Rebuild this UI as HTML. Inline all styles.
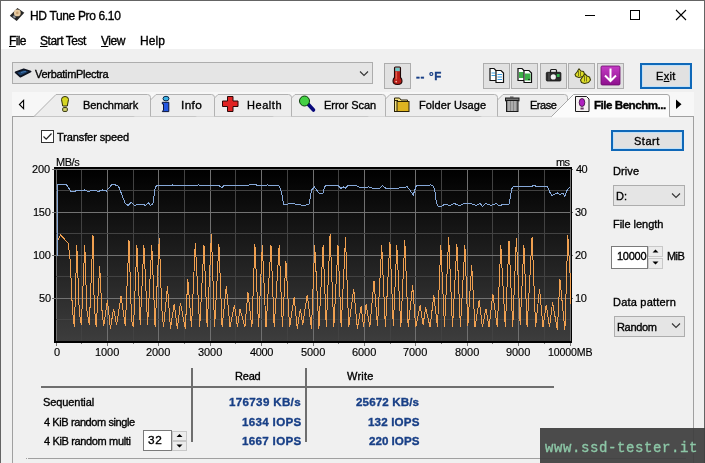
<!DOCTYPE html>
<html><head><meta charset="utf-8"><style>
*{margin:0;padding:0;box-sizing:border-box}
html,body{width:705px;height:463px;overflow:hidden;background:#f0f0f0}
body{position:relative;font-family:"Liberation Sans",sans-serif;color:#000}
.a{position:absolute}
.t{position:absolute;white-space:nowrap;line-height:1;will-change:transform;-webkit-text-stroke:0.35px currentColor}
.btn{position:absolute;background:#e1e1e1;border:1px solid #adadad}
.combo{position:absolute;background:#e5e5e5;border:1px solid #adadad}
.dbtn{position:absolute;background:#e1e1e1;border:2px solid #0f68b8;box-shadow:inset 0 0 0 1px #bfe0f8}
.blue{font-weight:bold;color:#183f86}
u{text-decoration:underline;text-decoration-thickness:1px;text-underline-offset:1px}
</style></head><body>
<div class="a" style="left:0;top:0;width:705px;height:49px;background:#fff"></div>
<div class="a" style="left:0;top:0;width:705px;height:1px;background:#646464"></div>
<div class="a" style="left:0;top:0;width:1px;height:463px;background:#646464"></div>
<div class="a" style="left:704px;top:0;width:1px;height:463px;background:#646464"></div>
<svg class="a" style="left:0;top:0" width="40" height="30">
<polygon points="17.4,8 24.3,12.8 16.7,20.9 9.8,15.7" fill="#262626"/>
<circle cx="17.3" cy="12.9" r="3.4" fill="#e6caa0"/><circle cx="17.3" cy="12.9" r="1.3" fill="#c8a070"/>
<polygon points="12.5,16.2 14.5,15 16,17.5 14.2,18.6" fill="#8a9098"/>
</svg>
<div class="a" style="left:585px;top:15px;width:10px;height:1px;background:#000"></div>
<div class="a" style="left:630px;top:10px;width:10px;height:10px;border:1px solid #000"></div>
<svg class="a" style="left:675px;top:9px" width="12" height="12"><path d="M1 1L11 11M11 1L1 11" stroke="#000" stroke-width="1.1"/></svg>
<div class="combo" style="left:12px;top:62px;width:361px;height:22px"></div>
<svg class="a" style="left:12px;top:64px" width="24" height="18">
<polygon points="3.6,8.3 11.7,5.3 18.6,7.5 8.3,12.6" fill="#1e4470" stroke="#0c1220" stroke-width="1.8" stroke-linejoin="round"/>
<path d="M9,8.6 L14,7.2" stroke="#3e74b0" stroke-width="1"/>
</svg>
<svg class="a" style="left:359px;top:70px" width="12" height="8"><path d="M1 1.5 L5 5.5 L9 1.5" fill="none" stroke="#333" stroke-width="1.1"/></svg>
<div class="btn" style="left:384px;top:63px;width:27px;height:26px"></div>
<svg class="a" style="left:386px;top:64px" width="22" height="24">
<path d="M8.5,4 Q8.5,3 9.5,3 L13.5,3 Q14.5,3 14.5,4 L14.5,13.5 Q16,15 16,17 Q16,20.5 11.5,20.5 Q7,20.5 7,17 Q7,15 8.5,13.5 Z" fill="#b81c16" stroke="#1e0606" stroke-width="1.1"/>
<rect x="9.2" y="3.6" width="4.6" height="3.6" fill="#70c8c8"/>
<rect x="9.5" y="7.5" width="1.6" height="8" fill="#e05a48"/>
<circle cx="10.2" cy="17.6" r="0.9" fill="#f0b0a0"/>
</svg>
<div class="btn" style="left:483px;top:63px;width:27px;height:26px"></div>
<div class="btn" style="left:511px;top:63px;width:27px;height:26px"></div>
<div class="btn" style="left:540px;top:63px;width:27px;height:26px"></div>
<div class="btn" style="left:568px;top:63px;width:27px;height:26px"></div>
<div class="btn" style="left:597px;top:63px;width:27px;height:26px"></div>
<svg class="a" style="left:484px;top:64px" width="54" height="24">
<path d="M6,4.5 L10.0,4.5 L12.5,7.0 L12.5,16.5 L6,16.5 Z" fill="#fff" stroke="#101010" stroke-width="1.2"/>
<path d="M7.5,9 h4 M7.5,11.5 h4" stroke="#3aa0e0" stroke-width="1.2"/>
<path d="M12,6.5 L17.0,6.5 L19.5,9.0 L19.5,18.5 L12,18.5 Z" fill="#fff" stroke="#101010" stroke-width="1.2"/>
<path d="M13.5,10.5 h4.5 M13.5,13 h4.5 M13.5,15.5 h4.5" stroke="#3a9ae0" stroke-width="1.2"/>
<path d="M34,4.5 L38.0,4.5 L40.5,7.0 L40.5,16.5 L34,16.5 Z" fill="#fff" stroke="#101010" stroke-width="1.2"/>
<rect x="35" y="8" width="4.5" height="6" fill="#3cb048"/>
<path d="M40,6.5 L45.0,6.5 L47.5,9.0 L47.5,18.5 L40,18.5 Z" fill="#fff" stroke="#101010" stroke-width="1.2"/>
<rect x="41" y="9.5" width="5.5" height="7" fill="#3cb048"/>
<circle cx="45" cy="15.5" r="0.8" fill="#111"/>
</svg>
<svg class="a" style="left:540px;top:64px" width="28" height="24">
<path d="M10.5,8.8 V6.5 Q10.5,5.5 11.5,5.5 L15.5,5.5 Q16.5,5.5 16.5,6.5 V8.8" fill="#e8e8e8" stroke="#1a1a1a" stroke-width="1.2"/>
<rect x="6.3" y="8.3" width="14.6" height="8.7" rx="1" fill="#2a2a2a" stroke="#141414" stroke-width="0.8"/>
<line x1="9" y1="9" x2="9" y2="16.5" stroke="#6a6a6a" stroke-width="0.8"/>
<circle cx="13.3" cy="12.9" r="2.6" fill="#f2f2f2"/>
<rect x="16.8" y="10" width="2.8" height="3" fill="#2fae4a"/>
</svg>
<svg class="a" style="left:569.5px;top:64px" width="28" height="24">
<path d="M5,10.5 L7,8 L9,4.8 L11,7 L13.5,7.5 L14.5,10 L13,12.5 L9,13.5 L6,12.5 Z" fill="#dede28" stroke="#3c3c0a" stroke-width="1.1" stroke-linejoin="round"/>
<path d="M10.5,16 L12.5,13 L15,10 L17,12 L19.5,13 L20.5,16 L18.5,18.5 L14.5,19.5 L11.5,18.5 Z" fill="#dede28" stroke="#3c3c0a" stroke-width="1.1" stroke-linejoin="round"/>
<path d="M8.5,7 v5 M10.5,7.5 v4.5 M14.5,12 v5.5 M16.5,12.5 v5" stroke="#6a6a14" stroke-width="0.9"/>
</svg>
<svg class="a" style="left:597px;top:64px" width="28" height="24">
<defs><linearGradient id="pg" x1="0" y1="0" x2="0" y2="1"><stop offset="0" stop-color="#c43cc4"/><stop offset="1" stop-color="#8e108e"/></linearGradient></defs>
<rect x="4" y="2" width="19" height="19" rx="1.2" fill="url(#pg)" stroke="#6a0a6a" stroke-width="0.8"/>
<path d="M13.5,4.5 V17 M8,11.5 L13.5,17 L19,11.5" fill="none" stroke="#fff" stroke-width="2"/>
</svg>
<div class="dbtn" style="left:640px;top:63px;width:52px;height:26px"></div>
<div class="a" style="left:12px;top:92px;width:682px;height:24px;background:#f7f7f7"></div>
<div class="a" style="left:12px;top:116px;width:682px;height:347px;border:1px solid #a0a0a0;border-bottom:none;background:#f0f0f0"></div>
<svg class="a" style="left:17px;top:98px" width="10" height="13"><path d="M6.6,2.4 L6.6,10.6 L2.4,6.5 Z" fill="none" stroke="#000" stroke-width="1.1"/></svg>
<svg class="a" style="left:674px;top:98px" width="10" height="13"><path d="M2,1.5 L7.5,6.3 L2,11 Z" fill="#000"/></svg>
<svg class="a" style="left:0;top:0" width="705" height="120">
<path d="M481,116.5 L503,94.5 L564.5,94.5 Q567.5,94.5 567.5,97.5 L567.5,116.5" fill="#ededed" stroke="#b2b2b2" stroke-width="1"/>
<path d="M368,116.5 L390,94.5 L494.5,94.5 Q497.5,94.5 497.5,97.5 L497.5,116.5" fill="#ededed" stroke="#b2b2b2" stroke-width="1"/>
<path d="M273,116.5 L295,94.5 L382.5,94.5 Q385.5,94.5 385.5,97.5 L385.5,116.5" fill="#ededed" stroke="#b2b2b2" stroke-width="1"/>
<path d="M196,116.5 L218,94.5 L288.5,94.5 Q291.5,94.5 291.5,97.5 L291.5,116.5" fill="#ededed" stroke="#b2b2b2" stroke-width="1"/>
<path d="M134,116.5 L156,94.5 L211.5,94.5 Q214.5,94.5 214.5,97.5 L214.5,116.5" fill="#ededed" stroke="#b2b2b2" stroke-width="1"/>
<path d="M34,116.5 L56,94.5 L147.5,94.5 Q150.5,94.5 150.5,97.5 L150.5,116.5" fill="#ededed" stroke="#b2b2b2" stroke-width="1"/>
<path d="M551.5,116.5 L573.5,94.5 L667,94.5 Q669.5,94.5 669.5,97 L669.5,116.5" fill="#fbfbfb" stroke="#a8a8a8" stroke-width="1"/>
<rect x="552" y="116" width="117" height="1.5" fill="#fbfbfb"/>
</svg>
<svg class="a" style="left:0;top:0" width="705" height="120">
<path d="M61.5,99.5 Q61.5,96.5 65,96.5 Q68.5,96.5 68.5,99.5 L67.3,106 L62.7,106 Z" fill="#d6d622" stroke="#2e2e08" stroke-width="1"/>
<rect x="62.7" y="107.6" width="4.6" height="3.8" rx="1" fill="#d6d670" stroke="#2e2e08" stroke-width="1"/>
<ellipse cx="166" cy="98.6" rx="3" ry="2.3" fill="#3cb2e4" stroke="#0c2848" stroke-width="1"/>
<path d="M162.3,102.3 L168.8,102.3 L168.8,111.6 L162.3,111.6 L163.5,110 L163.5,104 L162.3,104 Z" fill="#2456e0" stroke="#0a1438" stroke-width="1"/>
<path d="M227.5,96.5 h5.5 v4.5 h5 v5.5 h-5 v5 h-5.5 v-5 h-5 v-5.5 h5 Z" fill="#e02424" stroke="#2a0808" stroke-width="1"/>
<line x1="308" y1="104" x2="313.5" y2="110" stroke="#08087a" stroke-width="3.6" stroke-linecap="round"/>
<circle cx="304.5" cy="101" r="5" fill="#44d044" stroke="#0a3a0a" stroke-width="1"/>
<path d="M394.5,98 h5 l1.5,2 h6.5 v1.5 L394.5,101.5 Z" fill="#f0e080" stroke="#2a2208" stroke-width="1"/>
<rect x="394.5" y="100.5" width="3" height="11" fill="#f0e080" stroke="#2a2208" stroke-width="1"/>
<rect x="397" y="101.5" width="12" height="10" fill="#deb420" stroke="#2a2208" stroke-width="1"/>
<rect x="505.5" y="98" width="13.5" height="2.8" fill="#707070" stroke="#1a1a1a" stroke-width="1"/>
<rect x="510" y="96.5" width="3.5" height="1.8" fill="#555" />
<rect x="506.5" y="100.5" width="11.5" height="11" fill="#888" stroke="#1a1a1a" stroke-width="1"/>
<path d="M509,101 v10 M512,101 v10 M515,101 v10" stroke="#d0d0d0" stroke-width="1"/>
<path d="M575.5,96.5 L586.5,96.5 L589,99 L589,111.5 L575.5,111.5 Z" fill="#f4f0f0" stroke="#1a1a1a" stroke-width="1"/>
<ellipse cx="582" cy="102.5" rx="2.8" ry="4" fill="#b020c0" stroke="#3a0a3a" stroke-width="0.8"/>
<rect x="580.5" y="107.5" width="3.2" height="2" fill="#6a3a6a"/>
</svg>
<div class="a" style="left:41px;top:130px;width:13px;height:13px;border:1px solid #333;background:#fff"></div>
<svg class="a" style="left:41px;top:130px" width="13" height="13"><path d="M2.5,6.5 L5.2,9.2 L10.5,3.5" fill="none" stroke="#222" stroke-width="1.2"/></svg>
<svg class="a" style="left:0;top:0" width="705" height="463">
<defs><linearGradient id="bg" x1="0" y1="0" x2="0" y2="1"><stop offset="0" stop-color="#000"/><stop offset="1" stop-color="#3d3d3d"/></linearGradient></defs>
<rect x="54" y="167" width="518" height="176" fill="#000"/>
<rect x="56" y="169" width="515" height="172" fill="url(#bg)"/>
<g stroke="#5c5c5c" stroke-width="1" shape-rendering="crispEdges"><line x1="56.5" y1="169" x2="56.5" y2="341" stroke="#707070"/><line x1="56.5" y1="343" x2="56.5" y2="346" stroke="#7a7a7a"/><line x1="81.5" y1="169" x2="81.5" y2="341" stroke="#424242"/><line x1="81.5" y1="343" x2="81.5" y2="344" stroke="#7a7a7a"/><line x1="107.5" y1="169" x2="107.5" y2="341" stroke="#707070"/><line x1="107.5" y1="343" x2="107.5" y2="346" stroke="#7a7a7a"/><line x1="133.5" y1="169" x2="133.5" y2="341" stroke="#424242"/><line x1="133.5" y1="343" x2="133.5" y2="344" stroke="#7a7a7a"/><line x1="158.5" y1="169" x2="158.5" y2="341" stroke="#707070"/><line x1="158.5" y1="343" x2="158.5" y2="346" stroke="#7a7a7a"/><line x1="184.5" y1="169" x2="184.5" y2="341" stroke="#424242"/><line x1="184.5" y1="343" x2="184.5" y2="344" stroke="#7a7a7a"/><line x1="210.5" y1="169" x2="210.5" y2="341" stroke="#707070"/><line x1="210.5" y1="343" x2="210.5" y2="346" stroke="#7a7a7a"/><line x1="235.5" y1="169" x2="235.5" y2="341" stroke="#424242"/><line x1="235.5" y1="343" x2="235.5" y2="344" stroke="#7a7a7a"/><line x1="261.5" y1="169" x2="261.5" y2="341" stroke="#707070"/><line x1="261.5" y1="343" x2="261.5" y2="346" stroke="#7a7a7a"/><line x1="287.5" y1="169" x2="287.5" y2="341" stroke="#424242"/><line x1="287.5" y1="343" x2="287.5" y2="344" stroke="#7a7a7a"/><line x1="313.5" y1="169" x2="313.5" y2="341" stroke="#707070"/><line x1="313.5" y1="343" x2="313.5" y2="346" stroke="#7a7a7a"/><line x1="338.5" y1="169" x2="338.5" y2="341" stroke="#424242"/><line x1="338.5" y1="343" x2="338.5" y2="344" stroke="#7a7a7a"/><line x1="364.5" y1="169" x2="364.5" y2="341" stroke="#707070"/><line x1="364.5" y1="343" x2="364.5" y2="346" stroke="#7a7a7a"/><line x1="390.5" y1="169" x2="390.5" y2="341" stroke="#424242"/><line x1="390.5" y1="343" x2="390.5" y2="344" stroke="#7a7a7a"/><line x1="415.5" y1="169" x2="415.5" y2="341" stroke="#707070"/><line x1="415.5" y1="343" x2="415.5" y2="346" stroke="#7a7a7a"/><line x1="441.5" y1="169" x2="441.5" y2="341" stroke="#424242"/><line x1="441.5" y1="343" x2="441.5" y2="344" stroke="#7a7a7a"/><line x1="467.5" y1="169" x2="467.5" y2="341" stroke="#707070"/><line x1="467.5" y1="343" x2="467.5" y2="346" stroke="#7a7a7a"/><line x1="492.5" y1="169" x2="492.5" y2="341" stroke="#424242"/><line x1="492.5" y1="343" x2="492.5" y2="344" stroke="#7a7a7a"/><line x1="518.5" y1="169" x2="518.5" y2="341" stroke="#707070"/><line x1="518.5" y1="343" x2="518.5" y2="346" stroke="#7a7a7a"/><line x1="544.5" y1="169" x2="544.5" y2="341" stroke="#424242"/><line x1="544.5" y1="343" x2="544.5" y2="344" stroke="#7a7a7a"/><line x1="570.5" y1="169" x2="570.5" y2="341" stroke="#707070"/><line x1="570.5" y1="343" x2="570.5" y2="346" stroke="#7a7a7a"/><line x1="52" y1="169.5" x2="573" y2="169.5" stroke="#727272"/><line x1="56" y1="190.5" x2="570" y2="190.5" stroke="#424242"/><line x1="52" y1="212.5" x2="573" y2="212.5" stroke="#727272"/><line x1="56" y1="233.5" x2="570" y2="233.5" stroke="#424242"/><line x1="52" y1="255.5" x2="573" y2="255.5" stroke="#727272"/><line x1="56" y1="276.5" x2="570" y2="276.5" stroke="#424242"/><line x1="52" y1="298.5" x2="573" y2="298.5" stroke="#727272"/><line x1="56" y1="319.5" x2="570" y2="319.5" stroke="#424242"/><line x1="56" y1="341.5" x2="570" y2="341.5" stroke="#727272"/></g>
<g fill="none" stroke-width="1" stroke-linejoin="miter" shape-rendering="crispEdges">
<polyline points="57.5,240.5 60.7,234.9 68.2,243.4 69.9,256.5 71.4,285.1 72.4,309.9 74.4,327.3 76.8,245.4 79.3,312.4 81.3,324.8 84.8,245.4 86.8,309.9 89.3,324.8 93.0,235.4 94.2,305.0 96.2,327.3 99.7,266.5 101.7,307.5 103.7,326.1 107.4,300.0 110.4,328.5 113.6,308.7 116.6,324.8 121.0,296.3 125.3,326.1 129.0,240.4 131.5,319.9 133.5,327.3 136.9,245.4 140.2,324.8 143.9,245.4 147.6,324.8 151.8,245.4 155.1,327.3 159.3,237.9 161.7,307.5 163.5,327.3 167.5,286.3 170.5,328.5 174.2,303.7 177.4,328.5 180.4,303.0 185.3,328.5 187.8,278.9 191.5,327.3 195.3,242.9 199.7,327.3 204.0,245.4 207.2,327.3 211.4,234.2 214.6,327.3 218.9,244.1 222.1,327.3 226.3,286.3 230.0,327.3 234.5,305.0 237.5,327.3 240.0,308.7 244.9,327.3 247.9,292.5 251.9,327.3 254.9,244.1 258.6,327.3 262.3,245.4 266.0,327.3 271.0,245.4 274.2,327.3 279.2,245.4 282.4,327.3 285.9,261.5 289.6,327.3 294.1,297.5 297.3,328.5 300.3,308.7 302.7,324.8 307.2,295.0 311.5,328.5 314.7,245.4 318.9,328.5 323.1,245.4 326.3,327.3 330.1,234.2 333.8,327.3 338.0,245.4 341.2,327.3 345.5,237.4 348.7,327.3 353.7,288.8 357.4,328.5 361.1,306.2 363.6,327.3 366.1,303.7 369.8,327.3 374.0,280.6 377.5,326.1 381.7,245.4 385.4,327.3 389.9,241.6 393.3,326.1 396.8,245.4 400.8,327.3 404.8,240.4 408.2,327.3 412.7,285.1 415.7,327.3 420.2,305.5 423.1,324.8 425.6,307.5 430.1,327.3 433.8,295.0 437.5,327.3 440.8,245.4 444.5,327.3 448.7,237.4 452.5,327.3 456.9,244.1 460.4,327.3 464.9,245.4 467.8,326.1 471.7,265.2 475.0,327.3 479.2,300.0 482.4,327.3 485.9,308.7 489.1,327.3 492.8,293.8 497.3,327.3 500.8,245.4 505.3,327.3 509.0,240.9 512.7,327.3 516.4,237.9 520.2,324.8 523.9,245.4 527.1,327.3 532.1,236.7 535.6,327.3 539.5,288.8 543.0,327.3 546.2,305.0 549.5,327.3 552.5,302.5 557.4,329.8 559.9,278.9 564.9,329.8 567.8,235.4 570.3,277.6 571.1,307.5" stroke="#f0a050"/>
<polyline points="57.5,255.5 57.5,184.8 66.5,184.8 71.0,191.5 73.3,192.0 75.5,191.0 82.3,190.8 84.5,190.0 88.3,191.5 94.3,190.0 98.1,191.5 102.6,190.0 106.4,191.0 111.6,185.0 113.9,184.5 118.4,186.0 121.4,193.5 125.2,203.5 128.2,205.5 131.2,202.5 134.2,205.5 138.7,204.0 142.5,204.0 145.5,205.5 148.5,203.0 150.7,205.5 153.0,203.5 155.2,187.5 157.0,185.7 171.4,185.7 172.9,184.8 174.4,185.7 197.2,185.7 198.7,184.8 201.2,185.9 203.2,185.0 210.6,185.0 211.6,185.7 219.1,185.7 221.8,187.6 224.0,185.7 248.3,185.7 249.3,184.8 256.2,184.8 257.2,185.7 266.2,185.7 267.7,184.8 269.7,185.7 278.6,185.7 280.1,187.9 281.1,190.9 282.1,195.9 283.8,204.5 288.0,204.0 292.5,203.5 298.2,204.5 304.6,205.5 309.2,204.0 311.5,189.9 314.4,186.9 316.4,189.9 319.9,193.9 322.9,193.9 324.4,187.4 325.4,185.9 328.8,185.0 337.3,185.0 340.8,188.4 343.7,186.9 345.7,188.1 348.2,185.0 351.2,185.0 354.2,185.9 356.6,185.9 359.6,187.4 365.1,187.9 368.1,186.9 371.0,187.4 373.5,188.9 378.9,188.9 382.4,185.7 386.9,188.9 390.4,188.1 396.3,188.1 397.8,188.9 399.3,187.9 407.2,186.9 408.7,188.4 413.2,194.9 416.2,185.9 419.7,185.0 424.1,185.0 425.6,185.7 429.1,185.7 430.6,184.8 433.1,185.9 434.1,188.4 434.9,191.4 435.7,198.5 437.5,206.0 441.2,206.5 444.9,204.0 449.5,205.5 454.1,203.5 459.6,205.5 464.3,203.5 471.6,204.0 476.2,205.5 479.9,203.5 482.7,206.5 485.5,203.5 491.0,205.5 496.5,203.5 499.3,206.0 503.9,204.0 509.0,204.5 510.6,195.5 512.2,187.5 513.8,186.2 532.4,186.2 534.0,185.0 535.6,186.0 547.3,186.0 550.0,192.5 552.1,195.5 557.4,193.0 560.1,194.5 562.7,193.0 564.9,196.5 567.0,190.5 570.2,186.5" stroke="#86a8d8"/>
</g>
<rect x="54" y="341" width="518" height="2" fill="#000"/>
<rect x="571" y="167" width="1" height="176" fill="#000"/>
</svg>
<div class="dbtn" style="left:611px;top:130px;width:73px;height:21px"></div>
<div class="combo" style="left:613px;top:185px;width:72px;height:21px"></div>
<svg class="a" style="left:671px;top:192px" width="12" height="8"><path d="M1 1.5 L5 5.5 L9 1.5" fill="none" stroke="#333" stroke-width="1.1"/></svg>
<div class="a" style="left:611px;top:246px;width:37px;height:23px;border:1px solid #7a7a7a;background:#fff"></div>
<div class="btn" style="left:648px;top:246px;width:15px;height:11px;background:#ececec;border-color:#c8c8c8"></div>
<div class="btn" style="left:648px;top:258px;width:15px;height:11px;background:#ececec;border-color:#c8c8c8"></div>
<svg class="a" style="left:648px;top:246px" width="15" height="23"><path d="M4.5,6.5 L7.5,3.5 L10.5,6.5 Z M4.5,15.5 L7.5,18.5 L10.5,15.5 Z" fill="#000"/></svg>
<div class="combo" style="left:614px;top:316px;width:71px;height:21px"></div>
<svg class="a" style="left:671px;top:322px" width="12" height="8"><path d="M1 1.5 L5 5.5 L9 1.5" fill="none" stroke="#333" stroke-width="1.1"/></svg>
<div class="a" style="left:41px;top:386px;width:513px;height:2px;background:#6e6e6e"></div>
<div class="a" style="left:191px;top:368px;width:2px;height:74px;background:#6e6e6e"></div>
<div class="a" style="left:305px;top:368px;width:2px;height:74px;background:#6e6e6e"></div>
<div class="a" style="left:143px;top:430px;width:29px;height:21px;border:1px solid #7a7a7a;background:#fff"></div>
<div class="btn" style="left:172px;top:431px;width:15px;height:10px;background:#ececec;border-color:#c8c8c8"></div>
<div class="btn" style="left:172px;top:441px;width:15px;height:10px;background:#ececec;border-color:#c8c8c8"></div>
<svg class="a" style="left:172px;top:431px" width="15" height="20"><path d="M4.5,6 L7.5,3 L10.5,6 Z M4.5,13.5 L7.5,16.5 L10.5,13.5 Z" fill="#000"/></svg>
<div class="a" style="left:28px;top:458px;width:658px;height:1px;background:#a0a0a0"></div><div class="a" style="left:26px;top:458px;width:1px;height:1px;background:#a0a0a0"></div>
<div class="t" style="left:30.0px;top:10px;font-size:12px;letter-spacing:-0.35px">HD Tune Pro 6.10</div>
<div class="t" style="left:9.1px;top:35px;font-size:12px;letter-spacing:-0.6px"><u>F</u>ile</div>
<div class="t" style="left:40.2px;top:35px;font-size:12px;letter-spacing:-0.467px"><u>S</u>tart Test</div>
<div class="t" style="left:101.2px;top:35px;font-size:12px;letter-spacing:-0.433px"><u>V</u>iew</div>
<div class="t" style="left:139.9px;top:35px;font-size:12px;letter-spacing:0.1px">Help</div>
<div class="t" style="left:35.2px;top:69px;font-size:11px;letter-spacing:-0.293px">VerbatimPlectra</div>
<div class="t" style="left:655.8px;top:71px;font-size:11px;letter-spacing:0.3px">E<u>x</u>it</div>
<div class="t" style="left:83.0px;top:100px;font-size:11px;letter-spacing:-0.062px">Benchmark</div>
<div class="t" style="left:181.1px;top:100px;font-size:11.8px;letter-spacing:0.367px">Info</div>
<div class="t" style="left:246.7px;top:100px;font-size:11px;letter-spacing:0.54px">Health</div>
<div class="t" style="left:323.7px;top:100px;font-size:11px;letter-spacing:-0.044px">Error Scan</div>
<div class="t" style="left:419.0px;top:100px;font-size:11px;letter-spacing:0.1px">Folder Usage</div>
<div class="t" style="left:530.0px;top:100px;font-size:11px;letter-spacing:-0.475px">Erase</div>
<div class="t" style="left:57.3px;top:132px;font-size:11px;letter-spacing:-0.108px">Transfer speed</div>
<div class="t" style="left:633.7px;top:136px;font-size:11px;letter-spacing:0.525px">Start</div>
<div class="t" style="left:612.7px;top:166px;font-size:11px;letter-spacing:0.1px">Drive</div>
<div class="t" style="left:615.5px;top:191px;font-size:11px;letter-spacing:0.0px">D:</div>
<div class="t" style="left:612.7px;top:219px;font-size:11px;letter-spacing:-0.04px">File length</div>
<div class="t" style="left:617.0px;top:251px;font-size:11px;letter-spacing:-0.25px">10000</div>
<div class="t" style="left:666.9px;top:251px;font-size:11px;letter-spacing:-0.6px">MiB</div>
<div class="t" style="left:612.9px;top:297px;font-size:11px;letter-spacing:0.209px">Data pattern</div>
<div class="t" style="left:616.6px;top:322px;font-size:11px;letter-spacing:-0.34px">Random</div>
<div class="t" style="left:234.65px;top:371px;font-size:11px;letter-spacing:-0.217px">Read</div>
<div class="t" style="left:346.7px;top:371px;font-size:11px;letter-spacing:0.25px">Write</div>
<div class="t" style="left:43.0px;top:397px;font-size:11px;letter-spacing:-0.089px">Sequential</div>
<div class="t" style="left:44.0px;top:417px;font-size:11px;letter-spacing:-0.403px">4 KiB random single</div>
<div class="t" style="left:44.0px;top:436px;font-size:11px;letter-spacing:-0.353px">4 KiB random multi</div>
<div class="t" style="left:148.3px;top:435px;font-size:11.8px;letter-spacing:0.7px">32</div>
<div class="t" style="left:416.4px;top:70px;font-size:11.6px;letter-spacing:0.65px;font-weight:bold;color:#183f86">-- °F</div>
<div class="t" style="left:593.8px;top:99px;font-size:11.6px;letter-spacing:-0.485px;font-weight:bold">File Benchm...</div>
<div class="t" style="left:229.0px;top:396px;font-size:11.6px;letter-spacing:0.33px;font-weight:bold;color:#183f86">176739 KB/s</div>
<div class="t" style="left:241.75px;top:416px;font-size:11.6px;letter-spacing:0.319px;font-weight:bold;color:#183f86">1634 IOPS</div>
<div class="t" style="left:241.75px;top:435px;font-size:11.6px;letter-spacing:0.319px;font-weight:bold;color:#183f86">1667 IOPS</div>
<div class="t" style="left:355.6px;top:396px;font-size:11.6px;letter-spacing:0.133px;font-weight:bold;color:#183f86">25672 KB/s</div>
<div class="t" style="left:367.7px;top:416px;font-size:11.6px;letter-spacing:0.157px;font-weight:bold;color:#183f86">132 IOPS</div>
<div class="t" style="left:368.7px;top:435px;font-size:11.6px;letter-spacing:0.014px;font-weight:bold;color:#183f86">220 IOPS</div>
<div class="t" style="left:55.8px;top:157px;font-size:11px;letter-spacing:-0.467px;-webkit-text-stroke:0.15px">MB/s</div>
<div class="t" style="left:555.9px;top:157px;font-size:11px;letter-spacing:-0.55px;-webkit-text-stroke:0.15px">ms</div>
<div class="t" style="left:32.45px;top:164px;font-size:11px;letter-spacing:-0.075px;-webkit-text-stroke:0.15px">200</div>
<div class="t" style="left:32.9px;top:207px;font-size:11px;letter-spacing:-0.3px;-webkit-text-stroke:0.15px">150</div>
<div class="t" style="left:32.9px;top:250px;font-size:11px;letter-spacing:-0.3px;-webkit-text-stroke:0.15px">100</div>
<div class="t" style="left:38.5px;top:293px;font-size:11px;letter-spacing:-0.2px;-webkit-text-stroke:0.15px">50</div>
<div class="t" style="left:575.6px;top:164px;font-size:11px;letter-spacing:-0.6px;-webkit-text-stroke:0.15px">40</div>
<div class="t" style="left:574.6px;top:207px;font-size:11px;letter-spacing:-0.4px;-webkit-text-stroke:0.15px">30</div>
<div class="t" style="left:574.6px;top:250px;font-size:11px;letter-spacing:-0.4px;-webkit-text-stroke:0.15px">20</div>
<div class="t" style="left:574.6px;top:293px;font-size:11px;letter-spacing:-0.4px;-webkit-text-stroke:0.15px">10</div>
<div class="t" style="left:53.8px;top:347px;font-size:11px;letter-spacing:-0.6px;-webkit-text-stroke:0.15px">0</div>
<div class="t" style="left:94.9px;top:347px;font-size:11px;letter-spacing:-0.067px;-webkit-text-stroke:0.15px">1000</div>
<div class="t" style="left:145.9px;top:347px;font-size:11px;letter-spacing:-0.067px;-webkit-text-stroke:0.15px">2000</div>
<div class="t" style="left:197.9px;top:347px;font-size:11px;letter-spacing:-0.067px;-webkit-text-stroke:0.15px">3000</div>
<div class="t" style="left:249.9px;top:347px;font-size:11px;letter-spacing:-0.4px;-webkit-text-stroke:0.15px">4000</div>
<div class="t" style="left:300.9px;top:347px;font-size:11px;letter-spacing:-0.067px;-webkit-text-stroke:0.15px">5000</div>
<div class="t" style="left:351.9px;top:347px;font-size:11px;letter-spacing:-0.067px;-webkit-text-stroke:0.15px">6000</div>
<div class="t" style="left:402.9px;top:347px;font-size:11px;letter-spacing:-0.067px;-webkit-text-stroke:0.15px">7000</div>
<div class="t" style="left:454.9px;top:347px;font-size:11px;letter-spacing:-0.067px;-webkit-text-stroke:0.15px">8000</div>
<div class="t" style="left:505.9px;top:347px;font-size:11px;letter-spacing:-0.067px;-webkit-text-stroke:0.15px">9000</div>
<div class="t" style="left:547.65px;top:347px;font-size:10.6px;letter-spacing:-0.117px;-webkit-text-stroke:0.15px">10000MB</div>
<div class="a" style="left:540px;top:428px;width:165px;height:35px;background:rgba(62,62,62,0.93)"></div>
<div class="t" style="left:544.5px;top:441px;font-size:14px;letter-spacing:0.6px;font-family:'Liberation Mono',monospace;color:#8cc6a6;-webkit-text-stroke:0.35px #8cc6a6">www.ssd-tester.it</div>
</body></html>
